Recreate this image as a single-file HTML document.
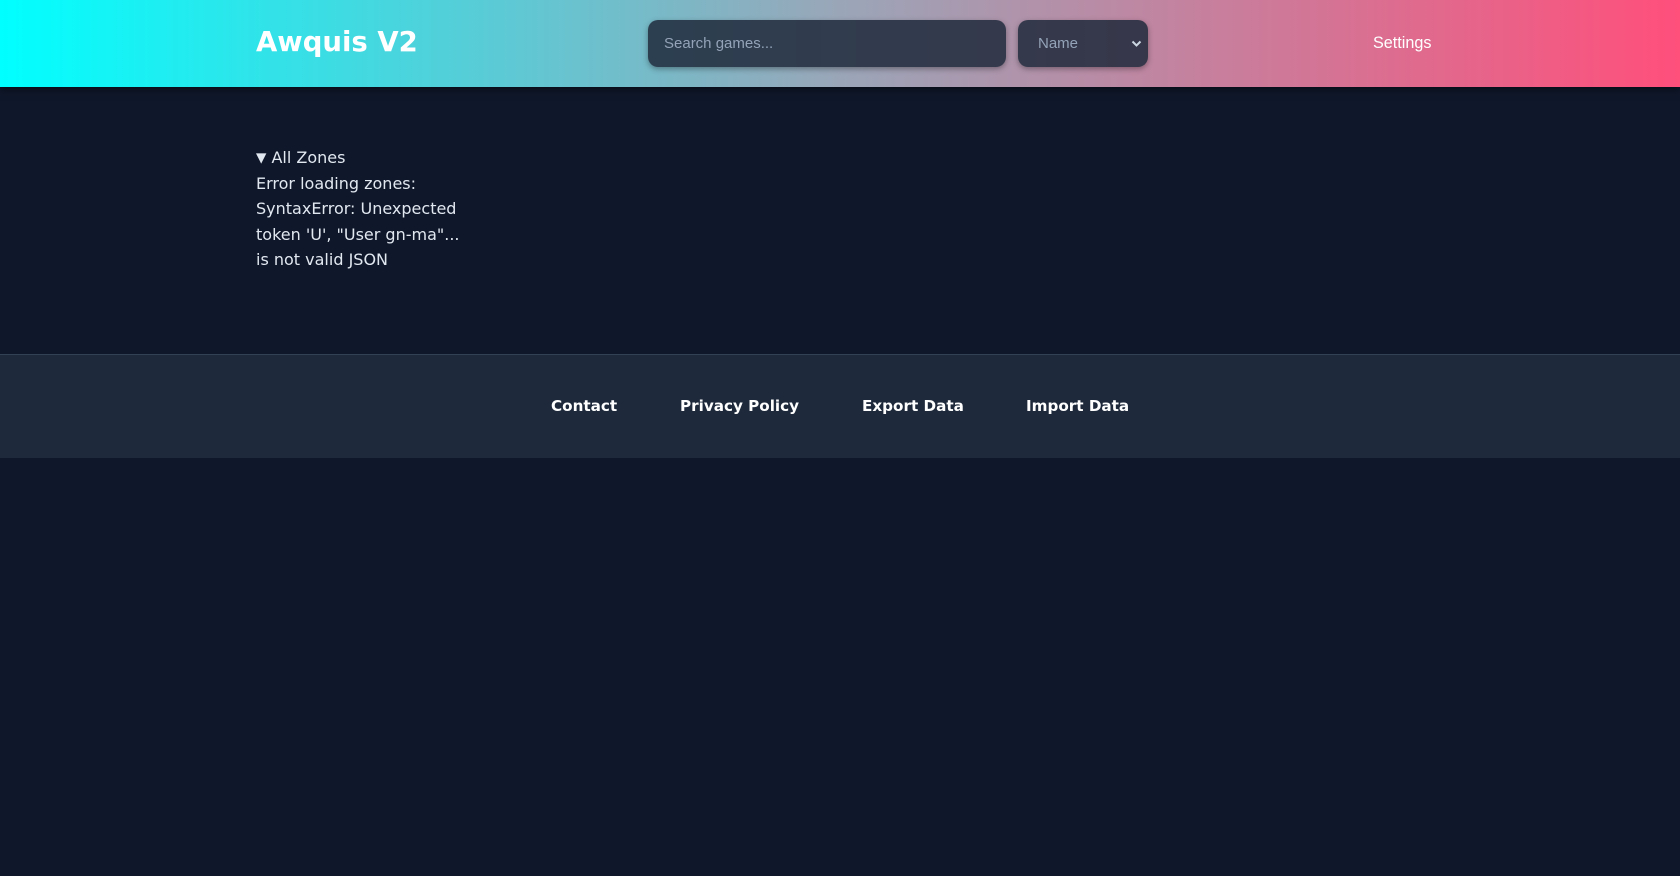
<!DOCTYPE html>
<html><head><style>
*{box-sizing:border-box;margin:0;padding:0}
body{width:1680px;height:876px;background:#0f172a;font-family:"DejaVu Sans",sans-serif;color:#e2e8f0;position:relative;overflow:hidden}
header{position:absolute;left:0;top:0;width:1680px;height:87px;background:linear-gradient(90deg,#00ffff 0%,#9aa6b8 50%,#ff4f7b 100%);box-shadow:0 2px 8px rgba(0,0,0,.5)}
.logo{position:absolute;left:256px;top:26px;font:bold 27.5px "DejaVu Sans",sans-serif;color:#fff}
.search{position:absolute;left:648px;top:20px;width:358px;height:47px;border-radius:10px;background:rgba(30,41,59,.85);box-shadow:0 2px 6px rgba(0,0,0,.35);font:15px "Liberation Sans",sans-serif;color:#94a3b8;padding:15px 16px}
.sel{position:absolute;left:1018px;top:20px;width:130px;height:47px;border-radius:10px;background:rgba(30,41,59,.85);box-shadow:0 2px 6px rgba(0,0,0,.35);font:15px "Liberation Sans",sans-serif;color:#94a3b8;padding:15px 20px}
.sel svg{position:absolute;right:6px;top:20px}
.set{position:absolute;left:1373px;top:34px;font:16.2px "Liberation Sans",sans-serif;color:#fff}
.content{position:absolute;left:256px;top:145px;width:215px;font-size:16px;line-height:25.5px;color:#e2e8f0}
.tri{font-size:13.5px;line-height:0;vertical-align:1px}
footer{position:absolute;left:0;top:354px;width:1680px;height:104px;background:#1e293b;border-top:1px solid #334155}
footer a{position:absolute;top:42px;font:bold 15.2px "DejaVu Sans",sans-serif;color:#fff;text-decoration:none}
</style></head><body>
<header>
<div class="logo">Awquis V2</div>
<div class="search">Search games...</div>
<div class="sel">Name<svg width="11" height="8" viewBox="0 0 11 8"><path d="M1.5 1.5l4 4 4-4" stroke="#cbd5e1" stroke-width="2" fill="none"/></svg></div>
<div class="set">Settings</div>
</header>
<div class="content"><span class="tri">&#9660;</span> All Zones<br>Error loading zones: SyntaxError: Unexpected token 'U', "User gn-ma"... is not valid JSON</div>
<footer>
<a style="left:551px">Contact</a>
<a style="left:680px">Privacy Policy</a>
<a style="left:862px">Export Data</a>
<a style="left:1026px">Import Data</a>
</footer>
</body></html>
